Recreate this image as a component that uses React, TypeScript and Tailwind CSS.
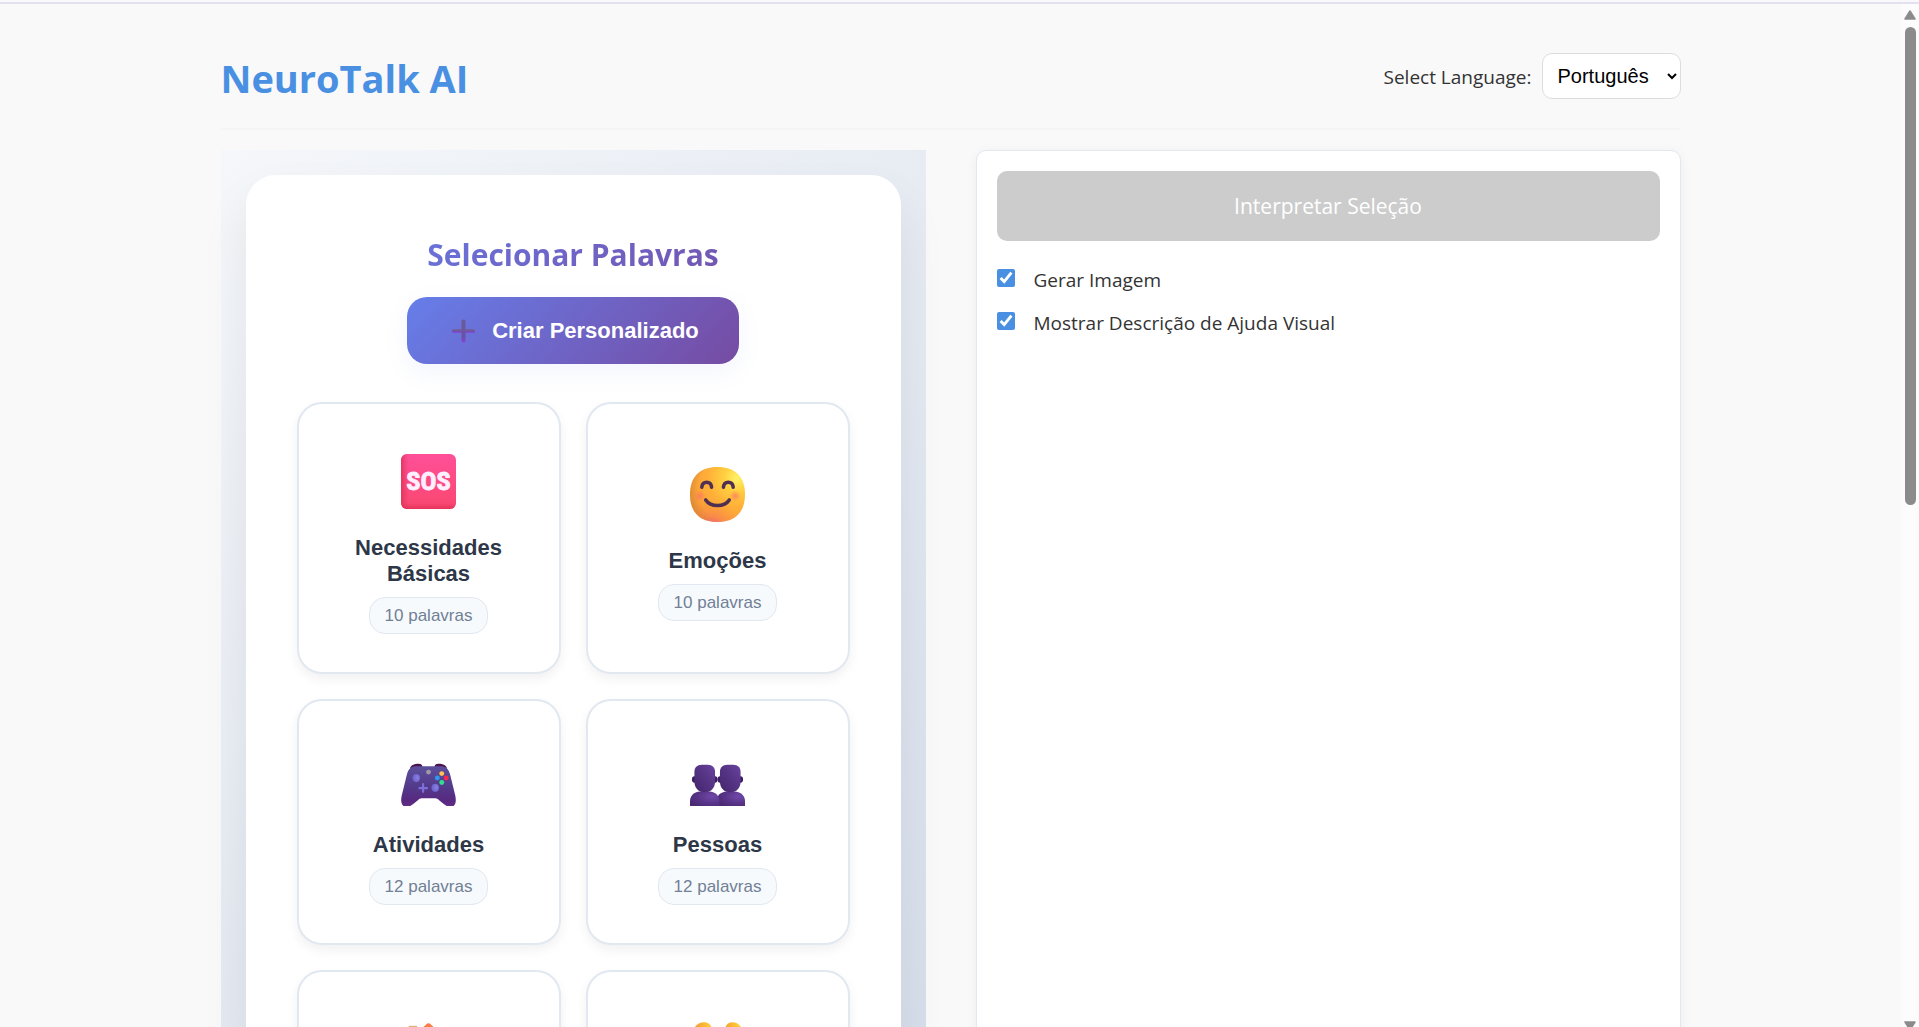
import { useState } from 'react';
import type { ReactNode } from 'react';

function SosIcon() {
  return (
    <svg viewBox="0 0 56 56" className="size-[55px]" aria-hidden="true">
      <defs>
        <linearGradient id="sosBase" x1="0" y1="0" x2="0" y2="1">
          <stop offset="0" stopColor="#ff5098" />
          <stop offset="0.5" stopColor="#fd4b84" />
          <stop offset="1" stopColor="#f9476f" />
        </linearGradient>
        <linearGradient id="sosLeft" x1="0" y1="0" x2="1" y2="0">
          <stop offset="0" stopColor="#d9304f" stopOpacity="0.75" />
          <stop offset="0.14" stopColor="#e03a60" stopOpacity="0" />
        </linearGradient>
        <linearGradient id="sosBottom" x1="0" y1="1" x2="0" y2="0">
          <stop offset="0" stopColor="#e02a50" stopOpacity="0.75" />
          <stop offset="0.12" stopColor="#e03a60" stopOpacity="0" />
        </linearGradient>
      </defs>
      <rect width="56" height="56" rx="6" fill="url(#sosBase)" />
      <rect width="56" height="56" rx="6" fill="url(#sosLeft)" />
      <rect width="56" height="56" rx="6" fill="url(#sosBottom)" />
      <text
        x="28"
        y="37"
        textAnchor="middle"
        fill="#fff0ff"
        stroke="#fff0ff"
        strokeWidth="0.8"
        strokeLinejoin="round"
        fontSize="27"
        fontWeight="700"
        fontFamily="'Liberation Sans Narrow', 'Roboto Condensed', Roboto, sans-serif"
      >
        SOS
      </text>
    </svg>
  );
}

function SmileIcon() {
  const face = 'M28 0C46 0 56 10 56 28S46 56 28 56 0 46 0 28 10 0 28 0Z';

  return (
    <svg viewBox="0 0 56 56" className="size-[55px]" aria-hidden="true">
      <defs>
        <radialGradient id="smileBase" cx="0.85" cy="0.2" r="0.95">
          <stop offset="0" stopColor="#fff266" />
          <stop offset="0.25" stopColor="#ffcf40" />
          <stop offset="0.55" stopColor="#ffb038" />
          <stop offset="1" stopColor="#f7983a" />
        </radialGradient>
        <radialGradient id="smilePink" cx="0.42" cy="1.1" r="0.5">
          <stop offset="0" stopColor="#f050b8" stopOpacity="0.95" />
          <stop offset="0.4" stopColor="#f86a60" stopOpacity="0.4" />
          <stop offset="1" stopColor="#ff8040" stopOpacity="0" />
        </radialGradient>
        <radialGradient id="smileLeft" cx="0.72" cy="0.42" r="0.76">
          <stop offset="0.75" stopColor="#c07830" stopOpacity="0" />
          <stop offset="1" stopColor="#c07830" stopOpacity="0.5" />
        </radialGradient>
        <radialGradient id="smileCheek">
          <stop offset="0" stopColor="#ff6f6a" stopOpacity="0.75" />
          <stop offset="1" stopColor="#ff7a60" stopOpacity="0" />
        </radialGradient>
      </defs>
      <path d={face} fill="url(#smileBase)" />
      <path d={face} fill="url(#smileLeft)" />
      <path d={face} fill="url(#smilePink)" />
      <circle cx="10" cy="29.500" r="6" fill="url(#smileCheek)" />
      <circle cx="46" cy="29.500" r="6" fill="url(#smileCheek)" />
      <g fill="none" stroke="#503050" strokeWidth="3.6" strokeLinecap="round">
        <path d="M12 20.5C13 14 21 14 22 20.5" />
        <path d="M34 20.5C35 14 43 14 44 20.5" />
        <path d="M16 33.500C21 41 35 41 40 33.500" />
      </g>
    </svg>
  );
}

function GamepadIcon() {
  return (
    <svg viewBox="0 0 56 56" className="size-[55px]" aria-hidden="true">
      <defs>
        <linearGradient id="padBase" x1="0" y1="0" x2="0" y2="1">
          <stop offset="0" stopColor="#5c4f9c" />
          <stop offset="0.5" stopColor="#533a8a" />
          <stop offset="0.85" stopColor="#582880" />
          <stop offset="1" stopColor="#643088" />
        </linearGradient>
        <radialGradient id="padStick" cx="0.65" cy="0.45" r="0.6">
          <stop offset="0" stopColor="#8a80e0" />
          <stop offset="1" stopColor="#6c62cc" />
        </radialGradient>
      </defs>
      <path d="M9 18C10 14.500 13 13 18 13c2.500 0 3.500 1 4 3.500ZM47 18C46 14.500 43 13 38 13c-2.500 0-3.500 1-4 3.500Z" fill="#4a1450" />
      <path
        d="M16 15.500H40C45.500 15.500 48.500 18 50 24L55.200 45C57 53 54.500 57 50.500 57C48 57 46 56 43.500 54L38.500 49.800C37.500 48.800 36.500 48 35 48H21C19.500 48 18.500 48.800 17.500 49.800L12.500 54C10 56 8 57 5.500 57C1.500 57-1 53 .8 45L6 24C7.500 18 10.500 15.500 16 15.500Z"
        fill="url(#padBase)"
      />
      <ellipse cx="15.500" cy="27.500" rx="3.800" ry="4.200" fill="url(#padStick)" />
      <ellipse cx="34.800" cy="37.500" rx="3.800" ry="4.200" fill="url(#padStick)" />
      <path d="M22.500 33.800v7.800M18.800 37.800h7.600" stroke="#7c70dc" strokeWidth="2.200" strokeLinecap="round" />
      <circle cx="28" cy="21.500" r="2.500" fill="#a098a8" />
      <circle cx="41.500" cy="23" r="2.500" fill="#ffc24a" />
      <circle cx="37" cy="27.500" r="2.500" fill="#2c98f0" />
      <circle cx="46" cy="27.500" r="2.500" fill="#f8284c" />
      <circle cx="41.500" cy="32" r="2.500" fill="#30e090" />
    </svg>
  );
}

function PeopleIcon() {
  return (
    <svg viewBox="0 0 56 56" className="size-[55px]" aria-hidden="true">
      <defs>
        <linearGradient id="headFill" x1="0" y1="1" x2="1" y2="0">
          <stop offset="0" stopColor="#44246c" />
          <stop offset="0.6" stopColor="#583688" />
          <stop offset="1" stopColor="#6a42a0" />
        </linearGradient>
        <radialGradient id="bodyFill" cx="0.75" cy="0.35" r="0.8">
          <stop offset="0" stopColor="#7048a8" />
          <stop offset="0.6" stopColor="#583488" />
          <stop offset="1" stopColor="#4a2a74" />
        </radialGradient>
      </defs>
      <path d="M28 56V48C28 44 33 41 40 41H42C50 41 56 44 56 51V56Z" fill="url(#bodyFill)" />
      <ellipse cx="30.500" cy="29" rx="2.500" ry="3.200" fill="#3c1c60" />
      <ellipse cx="51.500" cy="29" rx="2.500" ry="3.200" fill="#3c1c60" />
      <path d="M38 14H44C49 14 51.500 17 51.500 21V31C51.500 37 48 42 41 42S30.500 37 30.500 31V21C30.500 17 33 14 38 14Z" fill="url(#headFill)" />
      <path d="M0 56V51C0 44 6 41 13 41H17C24 41 30 44 30 51V56Z" fill="url(#bodyFill)" />
      <ellipse cx="4.500" cy="29" rx="2.500" ry="3.200" fill="#3c1c60" />
      <ellipse cx="25.500" cy="29" rx="2.500" ry="3.200" fill="#3c1c60" />
      <path d="M12 14H18C23 14 25.500 17 25.500 21V31C25.500 37 22 42 15 42S4.500 37 4.500 31V21C4.500 17 7 14 12 14Z" fill="url(#headFill)" />
    </svg>
  );
}

function HouseIcon() {
  return (
    <svg viewBox="0 0 56 56" className="size-[55px]" aria-hidden="true">
      <path d="M8 4H16V20H8Z" fill="#c98d5c" />
      <path d="M8 4H16V6H8Z" fill="#e0b078" />
      <path d="M8 26L28 8L48 26V54H8Z" fill="#f3dccb" />
      <path d="M23 36H33V54H23Z" fill="#8a5340" />
      <path d="M4 28L28 5L52 28" fill="none" stroke="#fb7d43" strokeWidth="7" strokeLinecap="round" strokeLinejoin="round" />
    </svg>
  );
}

function HandsIcon() {
  return (
    <svg viewBox="0 0 56 56" className="size-[55px]" aria-hidden="true">
      <defs>
        <linearGradient id="handFill" x1="0" y1="0" x2="1" y2="0">
          <stop offset="0" stopColor="#f49a2c" />
          <stop offset="1" stopColor="#ffd840" />
        </linearGradient>
      </defs>
      <path d="M4 8C6-2 21-2 22 6L25 40C25 50 6 50 5 40Z" fill="url(#handFill)" />
      <path d="M36 6C37-2 51-2 53 8V40C52 50 33 50 33 40Z" fill="url(#handFill)" />
    </svg>
  );
}

function PlusIcon() {
  return (
    <svg viewBox="0 0 33 24" className="h-6 w-[33px]" aria-hidden="true">
      <defs>
        <linearGradient id="plusColumn" x1="0" y1="0" x2="0" y2="1">
          <stop offset="0" stopColor="#6a5c98" />
          <stop offset="0.8" stopColor="#6c50a8" />
          <stop offset="1" stopColor="#8a40e0" />
        </linearGradient>
        <linearGradient id="plusBar" x1="0" y1="0" x2="0" y2="1">
          <stop offset="0" stopColor="#7468a0" />
          <stop offset="0.5" stopColor="#6a54a0" />
          <stop offset="1" stopColor="#8c44e4" />
        </linearGradient>
      </defs>
      <rect x="5" y="10" width="23" height="4" rx="1.500" fill="url(#plusBar)" />
      <rect x="14.500" y="0.500" width="4" height="23" rx="1.500" fill="url(#plusColumn)" />
    </svg>
  );
}

type Category = { name: string; words: number; icon: ReactNode };

const categories: Category[] = [
  { name: 'Necessidades Básicas', words: 10, icon: <SosIcon /> },
  { name: 'Emoções', words: 10, icon: <SmileIcon /> },
  { name: 'Atividades', words: 12, icon: <GamepadIcon /> },
  { name: 'Pessoas', words: 12, icon: <PeopleIcon /> },
  { name: 'Lugares', words: 12, icon: <HouseIcon /> },
  { name: 'Ações', words: 12, icon: <HandsIcon /> },
];

function CategoryCard({ name, words, icon }: Category) {
  return (
    <button
      type="button"
      className="flex flex-col items-center justify-center rounded-[25px] border-2 border-[#e2e8f0] bg-white p-[38px] font-['Liberation_Sans',Arial,sans-serif] shadow-[0_5px_12px_rgba(0,0,0,0.06)]"
    >
      <span className="flex h-[78px] items-center">{icon}</span>
      <span className="mt-[15px] text-center text-[22px] leading-[26px] font-bold text-[#2d3748]">{name}</span>
      <span className="mt-[10px] rounded-2xl border border-[#e2e8f0] bg-[#f7fafc] px-[15px] text-[17px] leading-[35px] text-[#718096]">
        {words} palavras
      </span>
    </button>
  );
}

function Scrollbar() {
  return (
    <div className="flex w-[18px] shrink-0 flex-col items-center bg-[#fcfcfc] pt-[6px]" aria-hidden="true">
      <svg viewBox="0 0 12 10" className="h-[10px] w-3 shrink-0">
        <path d="M6 1L11 9H1Z" fill="#8b8b8b" stroke="#8b8b8b" strokeWidth="1.500" strokeLinejoin="round" />
      </svg>
      <div className="mt-[7px] h-[47%] w-[11px] rounded-full bg-[#8b8b8b]" />
      <svg viewBox="0 0 12 6" className="mt-auto h-[6px] w-3 shrink-0">
        <path d="M1 1H11L6 9Z" fill="#8b8b8b" stroke="#8b8b8b" strokeWidth="1.500" strokeLinejoin="round" />
      </svg>
    </div>
  );
}

export default function App() {
  const [language, setLanguage] = useState('pt');
  const [generateImage, setGenerateImage] = useState(true);
  const [showDescription, setShowDescription] = useState(true);

  return (
    <div className="flex h-screen flex-col overflow-hidden bg-[#f9f9f9] font-['Open_Sans',sans-serif] text-[#333]">
      <div className="h-1 shrink-0 border-b-2 border-[#e2e2ef] bg-[#f8f8fd]" />
      <div className="flex min-h-0 flex-1">
        <div className="min-w-0 flex-1 overflow-hidden">
          <div className="mx-auto max-w-[1500px] p-5">
            {/* Header */}
            <header className="mb-5 flex items-center justify-between border-b-2 border-[#f5f5f5] py-[25px]">
              <h1 className="pt-1 text-[38px] leading-[50px] font-bold text-[#4a90e2]">NeuroTalk AI</h1>
              <div className="flex h-[54px] items-center gap-[10px]">
                <label htmlFor="language" className="pt-0.5 text-[19px]">Select Language:</label>
                <select
                  id="language"
                  value={language}
                  onChange={(e) => setLanguage(e.target.value)}
                  className="h-[46px] w-[139px] rounded-[10px] border border-[#ddd] bg-white px-[11px] font-['Liberation_Sans',Arial,sans-serif] text-[20px] text-black"
                >
                  <option value="pt">Português</option>
                  <option value="en">English</option>
                  <option value="es">Español</option>
                </select>
              </div>
            </header>

            <main className="grid grid-cols-2 gap-[50px]">
              {/* Word selection */}
              <section className="bg-[linear-gradient(135deg,#f5f7fa_0%,#c3cfe2_100%)] bg-[length:100%_1900px] p-[25px]">
                <div className="rounded-[30px] border border-white/20 bg-white/98 p-[50px] shadow-[0_25px_50px_rgba(0,0,0,0.07)]">
                  <h2 className="bg-[linear-gradient(135deg,#667eea_0%,#764ba2_100%)] bg-clip-text pt-1 text-center text-[30px] leading-[50px] font-bold text-transparent">
                    Selecionar Palavras
                  </h2>
                  <div className="mt-[17px] flex justify-center">
                    <button
                      type="button"
                      className="flex h-[67px] items-center gap-3 rounded-[20px] bg-[linear-gradient(135deg,#667eea_0%,#764ba2_100%)] px-10 font-['Liberation_Sans',Arial,sans-serif] text-[22px] font-bold text-white shadow-[0_8px_25px_rgba(102,126,234,0.08)]"
                    >
                      <PlusIcon />
                      Criar Personalizado
                    </button>
                  </div>
                  <div className="mt-[38px] grid grid-cols-2 gap-[25px]">
                    {categories.map((category) => (
                      <CategoryCard key={category.name} {...category} />
                    ))}
                  </div>
                </div>
              </section>

              {/* Interpretation */}
              <section className="rounded-[10px] border border-[#e2e8f0] bg-white p-5 shadow-[0_2px_12px_rgba(0,0,0,0.05)]">
                <button type="button" disabled className="h-[70px] w-full rounded-[10px] bg-[#ccc] pt-0.5 text-[21px] text-white">
                  Interpretar Seleção
                </button>
                <div className="mt-[22px] flex flex-col gap-[13px] text-[19px] leading-[26px]">
                  <label className="flex items-center gap-[19px]">
                    <input
                      type="checkbox"
                      checked={generateImage}
                      onChange={(e) => setGenerateImage(e.target.checked)}
                      className="size-[18px] accent-[#4a90e2]"
                    />
                    <span className="pt-1">Gerar Imagem</span>
                  </label>
                  <label className="flex items-center gap-[19px]">
                    <input
                      type="checkbox"
                      checked={showDescription}
                      onChange={(e) => setShowDescription(e.target.checked)}
                      className="size-[18px] accent-[#4a90e2]"
                    />
                    <span className="pt-1">Mostrar Descrição de Ajuda Visual</span>
                  </label>
                </div>
              </section>
            </main>
          </div>
        </div>
        <Scrollbar />
      </div>
    </div>
  );
}
